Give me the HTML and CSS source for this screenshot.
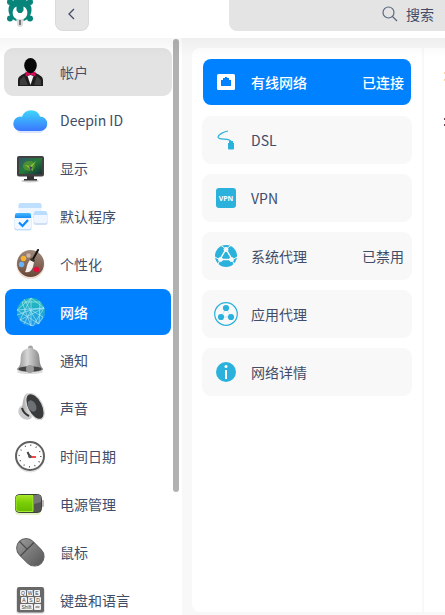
FILE: index.html
```html
<!DOCTYPE html>
<html lang="zh-CN">
<head>
  <meta charset="UTF-8">
  <meta name="viewport" content="width=device-width, initial-scale=1.0">
  <title>控制中心</title>
  <link rel="stylesheet" href="styles.css">
</head>
<body>
  <header class="topbar">
    <svg class="logo" viewBox="0 0 28 30">
      <g fill="#07857a">
        <circle cx="14" cy="10" r="11.5"/>
        <circle cx="4" cy="2" r="3"/>
        <circle cx="24" cy="2" r="3"/>
        <circle cx="4" cy="18.5" r="3"/>
        <circle cx="24" cy="18.5" r="3"/>
      </g>
      <path d="M10.5 6.5a7 7 0 0 0 0 12.5v2h7v-2a7 7 0 0 0 0-12.500v4l-2 2.500h-3l-2-2.500z" fill="#fff"/>
      <path d="M11 19h6v5a3 3 0 0 1-6 0z" fill="#dcdcdc"/>
      <path d="M14 20v5" stroke="#777" stroke-width="2"/>
    </svg>
    <button class="back" aria-label="返回">
      <svg viewBox="0 0 12 14"><path d="M8 2 3 7l5 5" fill="none" stroke="#414d68" stroke-width="1.3"/></svg>
    </button>
    <label class="search">
      <svg viewBox="0 0 16 16" fill="none" stroke="#5b6780" stroke-width="1.2"><circle cx="6.5" cy="6.5" r="5.5"/><path d="m10.5 10.5 4.5 4.5"/></svg>
      <input type="text" placeholder="搜索" aria-label="搜索">
    </label>
  </header>

  <div class="main">
    <nav class="sidebar">
      <div class="menu">
        <button class="menu-item hover">
          <svg viewBox="0 0 36 36">
            <path d="M6 32v-6c0-4 4-5 9-8h7c5 3 9 4 9 8v6z" fill="#1d1d1d"/>
            <path d="M8 31v-5l4-4 4 9zM29 31v-5l-4-4-3 9z" fill="#3d3d3d"/>
            <path d="m15.5 22 3 9 3-9-3-1z" fill="#f3f3f3"/>
            <ellipse cx="18.5" cy="11.5" rx="6.3" ry="7.5" fill="#080808"/>
            <path d="m13.5 17.5 5 2 5-2v5l-5-2-5 2z" fill="#d80b5b"/>
          </svg>
          <span>帐户</span>
        </button>
        <button class="menu-item">
          <svg viewBox="0 0 36 36">
            <defs><linearGradient id="cloud" x2="0" y2="1"><stop stop-color="#3fd7fb"/><stop offset="1" stop-color="#3a76ff"/></linearGradient></defs>
            <path d="M8 31a8 8 0 0 1 1-15h19a8 8 0 0 1 0 15z" fill="#c9d9ff" opacity=".7"/>
            <path d="M9 29a7 7 0 0 1-1-14.5q1 0 2 .2a9.500 9.500 0 0 1 18-.2 7.200 7.200 0 0 1 0 14.5z" fill="url(#cloud)"/>
          </svg>
          <span>Deepin ID</span>
        </button>
        <button class="menu-item">
          <svg viewBox="0 0 36 36">
            <defs><linearGradient id="screen" x2="1" y2="1"><stop stop-color="#31576d"/><stop offset=".5" stop-color="#267b38"/><stop offset="1" stop-color="#12313a"/></linearGradient></defs>
            <ellipse cx="18" cy="31" rx="9" ry="1.5" fill="#ccc"/>
            <path d="M15 26h7v3h3v1.5H12V29h3z" fill="#333"/>
            <rect x="5" y="6" width="27" height="20.5" rx="2" fill="#404040"/>
            <rect x="7" y="8" width="23" height="16" fill="url(#screen)"/>
            <ellipse cx="17" cy="16" rx="6" ry="5" fill="#6fae25" opacity=".5"/>
            <path d="m13 15 5 1 6-5-4 6 1 4-4-3z" fill="#8fc43a"/>
            <path d="m17 16 3 1-1 4z" fill="#432d68"/>
          </svg>
          <span>显示</span>
        </button>
        <button class="menu-item">
          <svg viewBox="0 0 36 36">
            <defs><linearGradient id="bar" x2="0" y2="1"><stop stop-color="#48b8ff"/><stop offset="1" stop-color="#168af3"/></linearGradient></defs>
            <rect x="6.5" y="5" width="23" height="15" rx="2" fill="#edf5ff"/>
            <path d="M6.5 10V7a2 2 0 0 1 2-2h19a2 2 0 0 1 2 2v3z" fill="#bfdfff"/>
            <rect x="21.5" y="14" width="14" height="13" rx="2" fill="#d0e0f4"/>
            <rect x="22" y="13" width="13" height="12" rx="2" fill="#f0f6ff"/>
            <path d="M22 17v-2a2 2 0 0 1 2-2h9a2 2 0 0 1 2 2v2z" fill="#b9dcff"/>
            <rect x="2.5" y="16" width="17" height="16.5" rx="2" fill="#c7dff8"/>
            <rect x="3" y="15" width="16" height="16" rx="2" fill="#f2f8ff"/>
            <path d="M3 20v-3a2 2 0 0 1 2-2h12a2 2 0 0 1 2 2v3z" fill="url(#bar)"/>
            <path d="m7 24.5 3.5 3.5 5.5-6" fill="none" stroke="#078bff" stroke-width="2.2"/>
          </svg>
          <span>默认程序</span>
        </button>
        <button class="menu-item">
          <svg viewBox="0 0 36 36">
            <defs><linearGradient id="wood" x2="0" y2="1"><stop stop-color="#a08b7d"/><stop offset="1" stop-color="#694737"/></linearGradient></defs>
            <circle cx="18.5" cy="19" r="14" fill="#f0ded6"/>
            <circle cx="18.5" cy="17.5" r="13.5" fill="url(#wood)"/>
            <circle cx="11.5" cy="12.5" r="2.7" fill="#f7b32b"/>
            <circle cx="16.5" cy="9.5" r="2.2" fill="#cdb5a5"/>
            <circle cx="9.5" cy="18.5" r="2.7" fill="#68b3f7"/>
            <circle cx="24.5" cy="23.5" r="2.7" fill="#e50b3c"/>
            <path d="M26 4 20 15" stroke="#151515" stroke-width="2" stroke-linecap="round"/>
            <path d="m18 14 4 2-1 5c-2 5-5 6-8 5 2-3 1-7 5-12z" fill="#f3f0ed"/>
            <path d="m19 12 4 2-1 2-4-2z" fill="#34302e"/>
          </svg>
          <span>个性化</span>
        </button>
        <button class="menu-item active">
          <svg viewBox="0 0 36 36">
            <defs><linearGradient id="globe" x2="0" y2="1"><stop stop-color="#20bcb5"/><stop offset="1" stop-color="#2199ee"/></linearGradient></defs>
            <circle cx="19" cy="18" r="14" fill="url(#globe)"/>
            <path d="M5 16 19 4l13 10-11 18L8 26l24-12L5 16l22 14 1-22L10 8l9 24V4L8 26M5 21l14-5 13-2M12 5l14 25 5-7-12-7-7 14" fill="none" stroke="#b4e8f6" stroke-width=".7" opacity=".9"/>
          </svg>
          <span>网络</span>
        </button>
        <button class="menu-item">
          <svg viewBox="0 0 36 36">
            <defs><linearGradient id="bell"><stop stop-color="#8c8c8c"/><stop offset=".4" stop-color="#d6d6d6"/><stop offset="1" stop-color="#777"/></linearGradient></defs>
            <ellipse cx="18" cy="30" rx="13" ry="2" fill="#ddd"/>
            <circle cx="18.5" cy="6" r="2.5" fill="#a6a6a6"/>
            <path d="M5 27c5-5 3-9 4-14 1-5 6-7 9-7s8 2 9 7c1 5 0 9 4 14 1 4-27 4-26 0z" fill="url(#bell)"/>
            <ellipse cx="18" cy="27" rx="11.5" ry="2.7" fill="#454545"/>
            <circle cx="18" cy="27" r="4" fill="#9a9a9a"/>
          </svg>
          <span>通知</span>
        </button>
        <button class="menu-item">
          <svg viewBox="0 0 36 36">
            <defs><linearGradient id="horn"><stop stop-color="#aaa"/><stop offset=".5" stop-color="#e8e8e8"/><stop offset="1" stop-color="#888"/></linearGradient></defs>
            <path d="M13 15c-8 0-8 9-4 12 4 4 10 3 11 0z" fill="#c9c9cd"/>
            <path d="M16 3c-5 1-5 10-6 15l2 5 18 7z" fill="url(#horn)"/>
            <path d="M10 18c1 4 3 6 7 8" fill="none" stroke="#333" stroke-width="2"/>
            <ellipse cx="23" cy="16.5" rx="7.5" ry="14" fill="#393a3c" stroke="#d9d9d9" stroke-width="1.3" transform="rotate(-27 23 16.5)"/>
            <ellipse cx="20" cy="16" rx="4" ry="6" fill="#6d7075" transform="rotate(-27 20 16)"/>
          </svg>
          <span>声音</span>
        </button>
        <button class="menu-item">
          <svg viewBox="0 0 36 36">
            <circle cx="18" cy="20" r="14.5" fill="#e4e4e4"/>
            <circle cx="18" cy="18" r="14" fill="#fff" stroke="#606060" stroke-width="2"/>
            <circle cx="18" cy="18" r="10.8" fill="none" stroke="#555" stroke-width="1.4" stroke-dasharray="1 4.655"/>
            <path d="m15.5 14 2.5 5" stroke="#444" stroke-width="2"/>
            <path d="M18 19h6" stroke="#f14848" stroke-width="2"/>
            <circle cx="18" cy="18.5" r="1.7" fill="#555"/>
          </svg>
          <span>时间日期</span>
        </button>
        <button class="menu-item">
          <svg viewBox="0 0 36 36">
            <defs><linearGradient id="charge" x2="0" y2="1"><stop stop-color="#a8e321"/><stop offset=".45" stop-color="#79cf05"/><stop offset="1" stop-color="#68b900"/></linearGradient></defs>
            <rect x="3" y="10" width="26" height="19" rx="4" fill="#e4f2c8"/>
            <rect x="29" y="14" width="3" height="7" rx="1" fill="#bbb"/>
            <rect x="3.5" y="8.5" width="26" height="18" rx="4" fill="#555" stroke="#3d4434"/>
            <path d="M21 9.5H7a3 3 0 0 0-3 3v10a3 3 0 0 0 3 3h14z" fill="url(#charge)" stroke="#a6eb32"/>
            <path d="M22 9h5a2 2 0 0 1 2 2v5l-7 2z" fill="#777"/>
          </svg>
          <span>电源管理</span>
        </button>
        <button class="menu-item">
          <svg viewBox="0 0 36 36">
            <defs><linearGradient id="mouse" x2="0" y2="1"><stop stop-color="#959595"/><stop offset="1" stop-color="#5c5c5c"/></linearGradient></defs>
            <g transform="rotate(-45 18 18)">
              <rect x="8.5" y="3" width="19" height="31" rx="9.5" fill="url(#mouse)" stroke="#626262"/>
              <path d="M8.5 14h19M18 3v11" stroke="#484848" stroke-width="1.2"/>
            </g>
          </svg>
          <span>鼠标</span>
        </button>
        <button class="menu-item">
          <svg viewBox="0 0 36 36">
            <rect x="4" y="6" width="29" height="26" rx="3" fill="#e4e4e4"/>
            <rect x="5" y="5" width="27" height="25.5" rx="2" fill="#686868"/>
            <g fill="#f0f0f0">
              <rect x="8" y="8" width="6" height="6" rx="1"/><rect x="15" y="8" width="6" height="6" rx="1"/><rect x="22" y="8" width="6" height="6" rx="1"/>
              <rect x="9" y="15" width="6" height="6" rx="1"/><rect x="16" y="15" width="6" height="6" rx="1"/><rect x="23" y="15" width="6" height="6" rx="1"/>
              <rect x="8" y="22" width="13" height="6" rx="1"/><rect x="22" y="22" width="7" height="6" rx="1"/>
            </g>
            <g class="keys">
              <text x="11" y="13">Q</text><text x="18" y="13">W</text><text x="25" y="13">E</text>
              <text x="12" y="20">A</text><text x="19" y="20">S</text><text x="26" y="20">D</text>
              <text x="14.5" y="27">Shift</text>
            </g>
            <path d="M23.5 25h4" stroke="#555"/>
          </svg>
          <span>键盘和语言</span>
        </button>
      </div>
      <div class="scrollbar"></div>
    </nav>

    <section class="panel network">
      <button class="net-item active">
        <svg viewBox="0 0 24 24"><rect x="3" y="4" width="18" height="16" rx="1.5" fill="#fff"/><path d="M7 16v-6h2V8h2V7h2v1h2v2h2v6z" fill="#0081ff"/></svg>
        <span>有线网络</span>
        <span class="status">已连接</span>
      </button>
      <button class="net-item">
        <svg viewBox="0 0 24 24"><path d="M14 3C9 4 4 7 4 9c0 4 13 0 13 5" fill="none" stroke="#2ab1dc" stroke-width="1.2"/><path d="M15 13h4v2h1v5.5a1 1 0 0 1-1 1h-4a1 1 0 0 1-1-1V15h1z" fill="#2ab1dc"/></svg>
        <span>DSL</span>
      </button>
      <button class="net-item">
        <svg viewBox="0 0 24 24"><rect x="2" y="2" width="20" height="20" rx="3" fill="#2ab1dc"/><text class="vpn" x="12" y="15">VPN</text></svg>
        <span>VPN</span>
      </button>
      <button class="net-item">
        <svg viewBox="0 0 24 24">
          <circle cx="12" cy="12" r="11" fill="#2ab1dc"/>
          <g fill="#f8f8f8" stroke="#f8f8f8">
            <path d="M12 5 6 15.5h12z" fill="none" stroke-width="1.5"/>
            <path d="M7 1.5 12 5l5-3.5M1 13l5 3-2 4M23 13l-5 3 2 4" fill="none"/>
            <circle cx="12" cy="5.5" r="2"/><circle cx="6.5" cy="15.5" r="2"/><circle cx="17.5" cy="15.5" r="2"/>
          </g>
          <path d="m12 8 4 6H8z" fill="#2ab1dc"/>
        </svg>
        <span>系统代理</span>
        <span class="status">已禁用</span>
      </button>
      <button class="net-item">
        <svg viewBox="0 0 24 24">
          <circle cx="12" cy="12" r="11.3" fill="none" stroke="#2ab1dc" stroke-width="1.2"/>
          <path d="M12 6 7 15h10z" fill="none" stroke="#b9e1ef" stroke-width=".7"/>
          <g fill="#2ab1dc"><circle cx="12" cy="6" r="3.1"/><circle cx="7" cy="15" r="3.1"/><circle cx="17" cy="15" r="3.1"/></g>
        </svg>
        <span>应用代理</span>
      </button>
      <button class="net-item">
        <svg viewBox="0 0 24 24"><circle cx="12" cy="12" r="10" fill="#2ab1dc"/><circle cx="12" cy="6.5" r="1.5" fill="#fff"/><path d="M12 10v9" stroke="#fff" stroke-width="2"/></svg>
        <span>网络详情</span>
      </button>
    </section>

    <section class="panel detail">
      <svg viewBox="0 0 24 24"><path d="M0 6h20v2H0zM0 13h20v2H0z" fill="#fbd9a8"/></svg>
      <svg viewBox="0 0 24 24"><path d="M0 4h12v2H0zM0 10h12v2H0z" fill="#6a4a50"/></svg>
    </section>
  </div>
</body>
</html>
```

FILE: styles.css
```css
* {
  box-sizing: border-box;
}
body {
  margin: 0;
  height: 100vh;
  display: flex;
  flex-direction: column;
  overflow: hidden;
  background: #fff;
  color: #414d68;
  font-family: "Noto Sans CJK SC", sans-serif;
  font-size: 14px;
  line-height: 20px;
}
button, input {
  font: inherit;
  color: inherit;
  border: none;
  padding: 0;
}
svg {
  display: block;
  flex: none;
}

/* top bar */
.topbar {
  display: flex;
  align-items: flex-start;
  flex: none;
  height: 38px;
  padding-left: 6px;
}
.logo {
  width: 28px;
  height: 30px;
}
.back {
  display: flex;
  align-items: center;
  justify-content: center;
  width: 34px;
  height: 31px;
  margin-left: 21px;
  padding-bottom: 3px;
  background: #e4e4e4;
  border: 1px solid #dadada;
  border-top: none;
  border-radius: 0 0 8px 8px;
}
.back svg {
  width: 12px;
  height: 14px;
}
.search {
  display: flex;
  align-items: center;
  flex: 1;
  min-width: 0;
  height: 31px;
  margin-left: 140px;
  padding: 0 0 4px 153px;
  gap: 8px;
  background: #e4e4e4;
  border-radius: 0 0 0 8px;
}
.search svg {
  width: 16px;
  height: 16px;
}
.search input {
  flex: 1;
  min-width: 0;
  background: none;
  outline: none;
}
.search input::placeholder {
  color: #414d68;
  opacity: 1;
}

.main {
  display: flex;
  flex: 1;
  min-height: 0;
  position: relative;
  background: #f8f8f8;
}
/* shade cast by the top bar */
.main::after {
  content: "";
  position: absolute;
  top: 0;
  left: 0;
  right: 0;
  height: 20px;
  background: linear-gradient(rgba(0, 0, 0, 0.04), rgba(0, 0, 0, 0));
  pointer-events: none;
}

/* sidebar */
.sidebar {
  display: flex;
  flex: none;
  width: 182px;
  overflow: hidden;
  background: #fff;
}
.menu {
  flex: 1;
  padding: 10px 1px 0 4px;
}
.scrollbar {
  width: 6px;
  height: 78.5%;
  margin: 1px 3px 0 0;
  background: #b1b1b1;
  border-radius: 3px;
}
.menu-item {
  display: flex;
  align-items: center;
  width: 100%;
  height: 48px;
  padding: 0 7px;
  gap: 12px;
  background: none;
  border: 1px solid transparent;
  border-radius: 9px;
  text-align: left;
}
.menu-item svg {
  width: 36px;
  height: 36px;
}
.menu-item.hover {
  background: #e3e3e3;
}
.menu-item.active,
.net-item.active {
  background: #0081ff;
  background-clip: padding-box;
  color: #fff;
  font-weight: 500;
}
.keys {
  font-family: "Liberation Sans", sans-serif;
  font-size: 5px;
  text-anchor: middle;
  fill: #444;
}

/* network list */
.panel {
  margin: 10px 0 3px;
  background: #fff;
}
.network {
  display: flex;
  flex-direction: column;
  flex: none;
  width: 230px;
  margin-left: 10px;
  padding: 10px;
  gap: 10px;
  border-radius: 8px 0 0 8px;
}
.net-item {
  display: flex;
  align-items: center;
  height: 48px;
  padding: 0 7px 0 11px;
  gap: 13px;
  background: #f8f8f8;
  border: 1px solid transparent;
  border-radius: 9px;
}
.net-item svg {
  width: 24px;
  height: 24px;
}
.status {
  margin-left: auto;
}
.vpn {
  font-family: "Open Sans", sans-serif;
  font-size: 7px;
  font-weight: 700;
  text-anchor: middle;
  fill: #fff;
}

/* detail pane, runs off the window edge */
.detail {
  display: flex;
  flex-direction: column;
  flex: 1;
  min-width: 0;
  margin-left: 2px;
  padding: 18px 0 0 20px;
  gap: 24px;
  overflow: hidden;
}
.detail svg {
  width: 24px;
  height: 24px;
}
```
